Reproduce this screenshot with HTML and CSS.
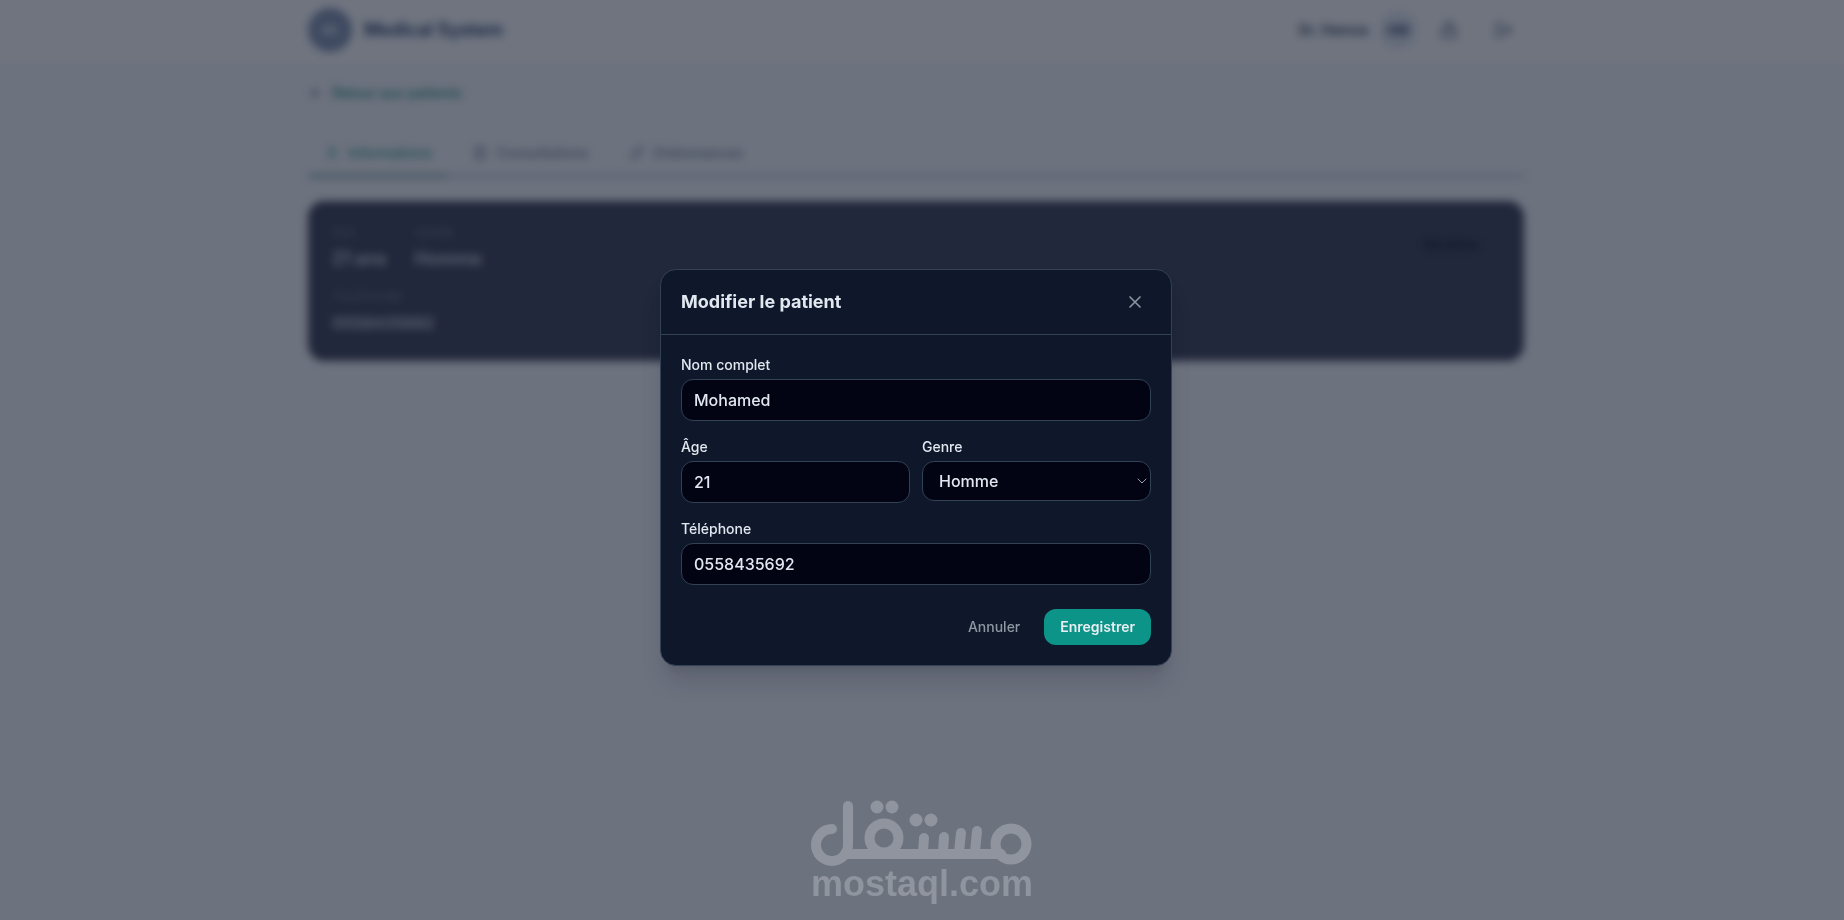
FILE: index.html
```html
<!DOCTYPE html>
<html lang="fr">
<head>
    <meta charset="UTF-8">
    <meta name="viewport" content="width=device-width, initial-scale=1.0">
    <title>Medical System</title>
    <link rel="stylesheet" href="styles.css">
</head>
<body>
    <header class="topbar">
        <div class="container topbar-inner">
            <a class="brand" href="#">
                <span class="brand-logo">MS</span>
                <span>Medical System</span>
            </a>
            <div class="user">
                <span class="user-name">Dr. Hamza</span>
                <span class="avatar">HM</span>
                <button type="button" class="icon-btn" aria-label="Sécurité">
                    <svg viewBox="0 0 24 24"><rect x="4" y="11" width="16" height="10" rx="2"/><path d="M8 11V7a4 4 0 0 1 8 0v4"/></svg>
                </button>
                <button type="button" class="icon-btn" aria-label="Déconnexion">
                    <svg viewBox="0 0 24 24"><path d="M10 4H5v16h5M10 12h11M16 7l5 5-5 5"/></svg>
                </button>
            </div>
        </div>
    </header>

    <main class="container">
        <a class="back" href="#">
            <svg viewBox="0 0 24 24"><path d="M19 12H5M11 6l-6 6 6 6"/></svg>
            Retour aux patients
        </a>

        <nav class="tabs">
            <a class="tab active" href="#">
                <svg viewBox="0 0 24 24"><circle cx="12" cy="8" r="4"/><path d="M5 21a7 7 0 0 1 14 0"/></svg>
                Informations
            </a>
            <a class="tab" href="#">
                <svg viewBox="0 0 24 24"><rect x="5" y="4" width="14" height="17" rx="2"/><path d="M9 3h6v4H9zM9 12h6M9 16h6"/></svg>
                Consultations
            </a>
            <a class="tab" href="#">
                <svg viewBox="0 0 24 24"><path d="M10 20a4 4 0 0 1-6-6L14 4a4 4 0 0 1 6 6zM9 9l6 6"/></svg>
                Ordonnances
            </a>
        </nav>

        <section class="card">
            <dl class="infos">
                <div><dt>ÂGE</dt><dd>21 ans</dd></div>
                <div><dt>GENRE</dt><dd>Homme</dd></div>
                <div class="wide"><dt>TÉLÉPHONE</dt><dd>0558435692</dd></div>
            </dl>
            <button type="button" class="edit">Modifier</button>
        </section>
    </main>

    <div class="overlay">
        <div class="modal" role="dialog" aria-modal="true" aria-labelledby="modal-title">
            <div class="modal-header">
                <h2 id="modal-title">Modifier le patient</h2>
                <button type="button" class="close" aria-label="Fermer">
                    <svg viewBox="0 0 24 24"><path d="M18 6L6 18M6 6l12 12"/></svg>
                </button>
            </div>
            <form class="modal-body">
                <div class="field">
                    <label for="nom">Nom complet</label>
                    <input type="text" id="nom" value="Mohamed">
                </div>
                <div class="row">
                    <div class="field">
                        <label for="age">Âge</label>
                        <input type="text" inputmode="numeric" id="age" value="21">
                    </div>
                    <div class="field">
                        <label for="genre">Genre</label>
                        <div class="select">
                            <select id="genre">
                                <option>Homme</option>
                                <option>Femme</option>
                            </select>
                            <svg viewBox="0 0 10 6"><path d="M1 1l4 4 4-4"/></svg>
                        </div>
                    </div>
                </div>
                <div class="field">
                    <label for="tel">Téléphone</label>
                    <input type="tel" id="tel" value="0558435692">
                </div>
                <div class="actions">
                    <button type="button" class="btn">Annuler</button>
                    <button type="submit" class="btn btn-primary">Enregistrer</button>
                </div>
            </form>
        </div>
    </div>

    <div class="watermark">
        <svg viewBox="0 0 222 66" role="img" aria-label="مستقل">
            <g class="strokes">
                <path d="M21 29A16 16 0 1 0 37 45V6"/>
                <path d="M34 54H190"/>
                <circle cx="73" cy="38" r="14.500"/>
                <circle cx="200" cy="44" r="15.500"/>
                <path d="M112 52L113 38M132 52L133 37M148 52L150 33M164 52L166 31"/>
            </g>
            <g class="dots">
                <circle cx="66" cy="7" r="6.500"/>
                <circle cx="81" cy="7" r="6.500"/>
                <circle cx="105" cy="20" r="6.500"/>
                <circle cx="120" cy="20" r="6.500"/>
            </g>
        </svg>
        <span>mostaql.com</span>
    </div>
</body>
</html>
```

FILE: styles.css
```css
* {
    box-sizing: border-box;
}

body {
    margin: 0;
    padding-right: 12px;
    min-height: 100vh;
    background: #f8fafc;
    color: #334155;
    font-family: Inter, "Liberation Sans", sans-serif;
    font-size: 14px;
    line-height: 20px;
}

a {
    color: inherit;
    text-decoration: none;
}

button, input, select {
    font: inherit;
    color: inherit;
}

button {
    border: 0;
    background: none;
    cursor: pointer;
}

svg {
    fill: none;
    stroke: currentColor;
    stroke-width: 2;
    stroke-linecap: round;
    stroke-linejoin: round;
}

.container {
    max-width: 1280px;
    margin: 0 auto;
    padding: 0 32px;
}

/* header */
.topbar {
    margin-right: -12px;
    padding-right: 12px;
    background: #fff;
}

.topbar-inner {
    display: flex;
    align-items: center;
    justify-content: space-between;
    height: 64px;
    padding-bottom: 4px;
}

.brand {
    display: flex;
    align-items: center;
    gap: 12px;
    font-size: 18px;
    font-weight: 600;
    color: #1e3a68;
}

.brand-logo {
    display: grid;
    place-items: center;
    width: 44px;
    height: 44px;
    border-radius: 50%;
    background: #8696b4;
    color: #fff;
    font-size: 10px;
}

.user {
    display: flex;
    align-items: center;
    gap: 12px;
    font-weight: 600;
    color: #334155;
}

.avatar {
    display: grid;
    place-items: center;
    width: 36px;
    height: 36px;
    border-radius: 50%;
    background: #e2e8f0;
    color: #2c4268;
    font-size: 13px;
}

.icon-btn {
    display: grid;
    place-items: center;
    width: 42px;
    height: 42px;
    padding: 0;
    color: #475569;
}

.icon-btn svg {
    width: 20px;
    height: 20px;
}

/* page */
.back {
    display: flex;
    align-items: center;
    gap: 8px;
    margin: 19px 0 30px;
    color: #1f9088;
    font-weight: 500;
}

.back svg, .tab svg {
    width: 16px;
    height: 16px;
}

.back svg {
    color: #64748b;
}

.tabs {
    display: flex;
    gap: 8px;
    border-bottom: 2px solid #a3aebd;
}

.tab {
    display: flex;
    align-items: center;
    gap: 8px;
    margin-bottom: -2px;
    padding: 10px 16px 12px;
    border-bottom: 2px solid transparent;
    color: #7c8798;
    font-weight: 500;
}

.tab.active {
    border-color: #20706f;
    color: #38a096;
}

.card {
    display: flex;
    align-items: flex-start;
    justify-content: space-between;
    margin-top: 24px;
    padding: 24px;
    border-radius: 16px;
    background: #3e4155;
}

.infos {
    display: grid;
    grid-template-columns: auto auto;
    gap: 16px 28px;
    margin: 0;
}

.infos .wide {
    grid-column: 1 / 3;
}

.infos dt {
    color: #707c90;
    font-size: 12px;
    line-height: 16px;
}

.infos dd {
    margin: 0;
    padding-top: 4px;
    color: #cbd5e1;
    font-size: 18px;
    font-weight: 600;
    line-height: 28px;
}

.infos .wide dd {
    font-size: 16px;
}

.edit {
    padding: 10px 20px;
    color: #0f172a;
    font-weight: 500;
}

/* modal */
.overlay {
    position: fixed;
    inset: 0;
    display: flex;
    align-items: center;
    justify-content: center;
    padding: 15px 12px 0 0;
    background: rgba(15, 23, 42, 0.6);
    backdrop-filter: blur(4px);
}

.modal {
    width: 100%;
    max-width: 512px;
    border: 1px solid #334155;
    border-radius: 16px;
    background: #0f172a;
    color: #e2e8f0;
    box-shadow: 0 20px 25px -5px rgba(15, 23, 42, 0.15), 0 8px 10px -6px rgba(15, 23, 42, 0.15);
}

.modal-header {
    display: flex;
    align-items: center;
    justify-content: space-between;
    height: 65px;
    padding: 0 20px;
    border-bottom: 1px solid #334155;
}

.modal-header h2 {
    margin: 0;
    font-size: 18px;
    font-weight: 700;
    line-height: 28px;
}

.close {
    display: grid;
    place-items: center;
    width: 32px;
    height: 32px;
    padding: 0;
    color: #8a93a0;
}

.close svg {
    width: 20px;
    height: 20px;
}

.modal-body {
    display: flex;
    flex-direction: column;
    gap: 16px;
    padding: 20px;
}

.row {
    display: grid;
    grid-template-columns: 1fr 1fr;
    gap: 12px;
}

.field label {
    display: block;
    margin-bottom: 4px;
    font-weight: 500;
}

.field input, .field select {
    display: block;
    width: 100%;
    height: 42px;
    padding: 0 12px;
    border: 1px solid #334155;
    border-radius: 12px;
    background: #020414;
    font-size: 16px;
    font-weight: 500;
    outline: none;
}

.select {
    position: relative;
}

.field select {
    height: 40px;
    padding: 0 16px;
    appearance: none;
}

.select svg {
    position: absolute;
    top: 17px;
    right: 4px;
    width: 10px;
    height: 6px;
    color: #94a3b8;
    stroke-width: 1;
    pointer-events: none;
}

.actions {
    display: flex;
    justify-content: flex-end;
    gap: 8px;
    padding-top: 8px;
}

.btn {
    padding: 8px 16px;
    border-radius: 12px;
    color: #8f97a3;
    font-weight: 500;
}

.btn-primary {
    background: #0d9488;
    color: #e8eef2;
    font-weight: 600;
}

/* watermark */
.watermark {
    position: fixed;
    right: 0;
    bottom: 19px;
    left: 0;
    display: flex;
    flex-direction: column;
    align-items: center;
    color: #8f949e;
    font-family: "Liberation Sans", Arial, sans-serif;
    font-size: 36px;
    font-weight: 700;
    line-height: 35px;
    pointer-events: none;
}

.watermark svg {
    width: 222px;
    height: 66px;
}

.watermark .strokes {
    stroke-width: 10;
}

.watermark .dots {
    fill: currentColor;
    stroke: none;
}
```
